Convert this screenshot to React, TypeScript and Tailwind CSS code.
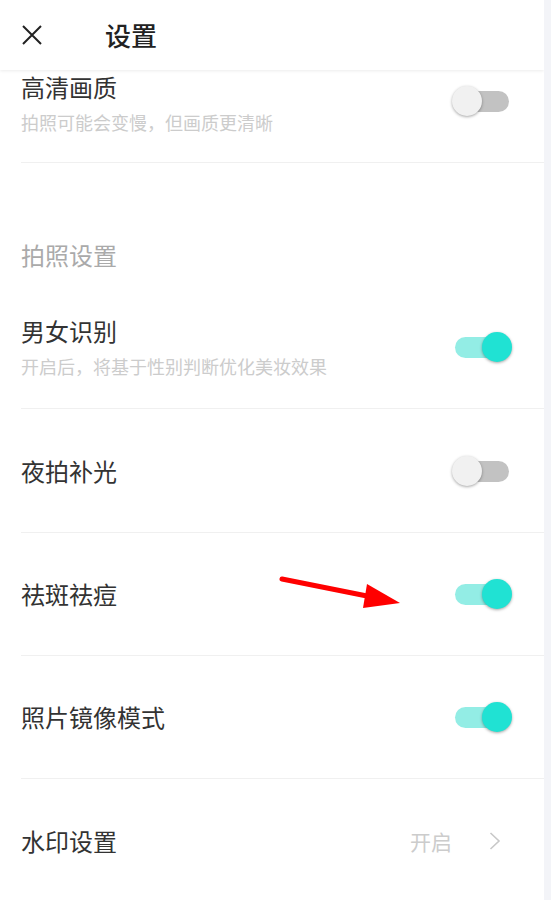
import React from "react";

const font = { fontFamily: '"Noto Sans CJK SC", "Noto Sans", sans-serif' };

function Toggle({ on, className = "" }: { on: boolean; className?: string }) {
  return (
    <div className={"relative mr-[32px] h-[30px] w-[60px] shrink-0 " + className}>
      <div
        className={
          "absolute left-[3px] right-[3px] top-[5px] h-[21px] rounded-full " +
          (on ? "bg-[#93ede5]" : "bg-[#c2c2c2]")
        }
      />
      <div
        className={
          "absolute top-0 h-[30px] w-[30px] rounded-full shadow-[0_1px_3px_rgba(0,0,0,0.35)] " +
          (on ? "right-0 bg-[#20e2d3]" : "left-0 bg-[#f1f1f1]")
        }
      />
    </div>
  );
}

function Row({
  title,
  sub,
  on,
  tall = true,
}: {
  title: string;
  sub?: string;
  on: boolean;
  tall?: boolean;
}) {
  return (
    <div
      className={
        "ml-[21px] flex items-center border-b border-[#f0f0f0] " + (tall ? "h-[124px]" : "h-[123px]")
      }
    >
      <div className="flex flex-1 flex-col gap-[10px]">
        <span className="text-[24px] leading-[28px] text-[#333]">{title}</span>
        {sub && <span className="text-[18px] leading-[22px] text-[#cccccc]">{sub}</span>}
      </div>
      <Toggle on={on} />
    </div>
  );
}

export default function App() {
  return (
    <div className="flex h-[900px] w-[551px] bg-[#f3f4f8]" style={font}>
      <div className="relative flex h-full w-[544px] flex-col overflow-hidden bg-white">
        <header className="relative z-10 flex h-[70px] shrink-0 items-center bg-white shadow-[0_1px_3px_rgba(0,0,0,0.08)]">
          <svg className="ml-[22px] h-[20px] w-[20px]" viewBox="0 0 20 20" fill="none">
            <path d="M1 1L19 19M19 1L1 19" stroke="#222" strokeWidth="2" />
          </svg>
          <h1 className="ml-[63px] text-[26px] font-medium leading-none text-[#222]">设置</h1>
        </header>

        <div className="flex flex-1 flex-col">
          <div className="ml-[21px] flex h-[93px] items-start border-b border-[#f0f0f0]">
            <div className="flex flex-1 flex-col gap-[10px] pt-[3px]">
              <span className="text-[24px] leading-[28px] text-[#333]">高清画质</span>
              <span className="text-[18px] leading-[22px] text-[#cccccc]">拍照可能会变慢，但画质更清晰</span>
            </div>
            <Toggle on={false} className="mt-[16px]" />
          </div>
          <div className="flex h-[122px] items-end pb-[16px] pl-[21px]">
            <span className="text-[24px] leading-[28px] text-[#aaaaaa]">拍照设置</span>
          </div>
          <Row title="男女识别" sub="开启后，将基于性别判断优化美妆效果" on />
          <Row title="夜拍补光" on={false} />
          <Row title="祛斑祛痘" on tall={false} />
          <Row title="照片镜像模式" on tall={false} />
          <div className="ml-[21px] flex h-[123px] items-center">
            <span className="flex-1 text-[24px] leading-[28px] text-[#333]">水印设置</span>
            <span className="text-[21px] leading-[28px] text-[#cccccc]">开启</span>
            <svg className="ml-[37px] mr-[43px] h-[20px] w-[12px]" viewBox="0 0 12 20" fill="none">
              <path d="M1.5 2L10 10L1.5 18" stroke="#c8c8c8" strokeWidth="1.6" />
            </svg>
          </div>
        </div>

        <svg
          className="pointer-events-none absolute left-0 top-0 h-[900px] w-[544px]"
          viewBox="0 0 544 900"
          fill="none"
        >
          <path d="M282 579L372 597" stroke="#ff0000" strokeWidth="5" strokeLinecap="round" />
          <polygon points="400,603 367,584 363,608" fill="#ff0000" />
        </svg>
      </div>
    </div>
  );
}
